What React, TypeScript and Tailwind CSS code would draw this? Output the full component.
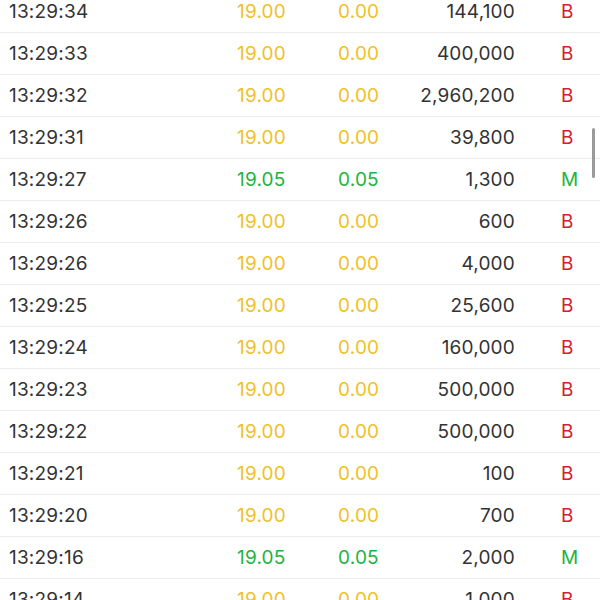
const rows = [
  { t: "13:29:34", p: "19.00", c: "0.00", v: "144,100", s: "B" },
  { t: "13:29:33", p: "19.00", c: "0.00", v: "400,000", s: "B" },
  { t: "13:29:32", p: "19.00", c: "0.00", v: "2,960,200", s: "B" },
  { t: "13:29:31", p: "19.00", c: "0.00", v: "39,800", s: "B" },
  { t: "13:29:27", p: "19.05", c: "0.05", v: "1,300", s: "M" },
  { t: "13:29:26", p: "19.00", c: "0.00", v: "600", s: "B" },
  { t: "13:29:26", p: "19.00", c: "0.00", v: "4,000", s: "B" },
  { t: "13:29:25", p: "19.00", c: "0.00", v: "25,600", s: "B" },
  { t: "13:29:24", p: "19.00", c: "0.00", v: "160,000", s: "B" },
  { t: "13:29:23", p: "19.00", c: "0.00", v: "500,000", s: "B" },
  { t: "13:29:22", p: "19.00", c: "0.00", v: "500,000", s: "B" },
  { t: "13:29:21", p: "19.00", c: "0.00", v: "100", s: "B" },
  { t: "13:29:20", p: "19.00", c: "0.00", v: "700", s: "B" },
  { t: "13:29:16", p: "19.05", c: "0.05", v: "2,000", s: "M" },
  { t: "13:29:14", p: "19.00", c: "0.00", v: "1,000", s: "B" },
];

export default function App() {
  return (
    <div
      className="relative w-[600px] h-[600px] overflow-hidden bg-white"
      style={{ fontFamily: "Inter, 'Liberation Sans', Arial, sans-serif" }}
    >
      <div className="-mt-[9px] flex flex-col">
        {rows.map((r, i) => {
          const up = r.s === "M";
          const tone = up ? "text-[#22b43e]" : "text-[#efc12a]";
          return (
            <div
              key={i}
              className="flex items-center h-[42px] pt-[2px] border-b border-[#ededed] text-[19px] text-[#333333] tracking-[0.2px]"
            >
              <span className="w-[237px] shrink-0 pl-[9px]">{r.t}</span>
              <span className={`w-[101px] shrink-0 ${tone}`}>{r.p}</span>
              <span className={`w-[60px] shrink-0 ${tone}`}>{r.c}</span>
              <span className="w-[117px] shrink-0 text-right">{r.v}</span>
              <span
                className={`flex-1 pl-[46px] ${up ? "text-[#22b43e]" : "text-[#d4202c]"}`}
              >
                {r.s}
              </span>
            </div>
          );
        })}
      </div>
      <div className="absolute right-[5px] top-[128px] w-[3px] h-[50px] rounded-full bg-[#9a9a9a]" />
    </div>
  );
}
